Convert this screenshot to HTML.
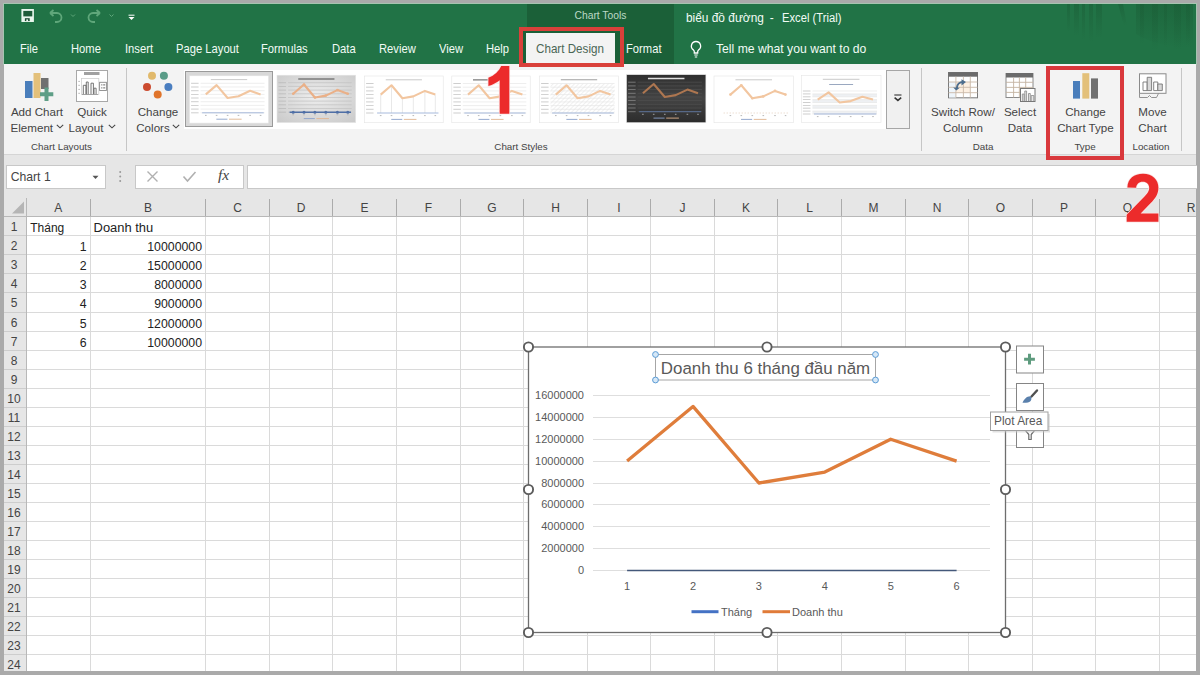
<!DOCTYPE html><html><head><meta charset="utf-8"><style>
*{margin:0;padding:0;box-sizing:border-box}
html,body{width:1200px;height:675px;overflow:hidden;background:#aaaaaa;font-family:"Liberation Sans",sans-serif;position:relative}
.a{position:absolute}
.t{position:absolute;white-space:nowrap;line-height:1}
</style></head><body>
<div class="a" style="left:4px;top:155px;width:1192px;height:62px;background:#e6e6e6"></div>
<svg class="a" style="left:0;top:0" width="1200" height="675" font-family="Liberation Sans, sans-serif"><rect x="26" y="216.5" width="1170" height="454.5" fill="#fff"/><rect x="4" y="198" width="1192" height="18.5" fill="#e6e6e6"/><rect x="4" y="198" width="22" height="473" fill="#e6e6e6"/><line x1="90.5" y1="216.5" x2="90.5" y2="671" stroke="#dadada" stroke-width="1"/><line x1="205.5" y1="216.5" x2="205.5" y2="671" stroke="#dadada" stroke-width="1"/><line x1="269.5" y1="216.5" x2="269.5" y2="671" stroke="#dadada" stroke-width="1"/><line x1="332.5" y1="216.5" x2="332.5" y2="671" stroke="#dadada" stroke-width="1"/><line x1="396.5" y1="216.5" x2="396.5" y2="671" stroke="#dadada" stroke-width="1"/><line x1="460.5" y1="216.5" x2="460.5" y2="671" stroke="#dadada" stroke-width="1"/><line x1="523.5" y1="216.5" x2="523.5" y2="671" stroke="#dadada" stroke-width="1"/><line x1="587.5" y1="216.5" x2="587.5" y2="671" stroke="#dadada" stroke-width="1"/><line x1="650.5" y1="216.5" x2="650.5" y2="671" stroke="#dadada" stroke-width="1"/><line x1="714.5" y1="216.5" x2="714.5" y2="671" stroke="#dadada" stroke-width="1"/><line x1="777.5" y1="216.5" x2="777.5" y2="671" stroke="#dadada" stroke-width="1"/><line x1="841.5" y1="216.5" x2="841.5" y2="671" stroke="#dadada" stroke-width="1"/><line x1="905.5" y1="216.5" x2="905.5" y2="671" stroke="#dadada" stroke-width="1"/><line x1="968.5" y1="216.5" x2="968.5" y2="671" stroke="#dadada" stroke-width="1"/><line x1="1032.5" y1="216.5" x2="1032.5" y2="671" stroke="#dadada" stroke-width="1"/><line x1="1095.5" y1="216.5" x2="1095.5" y2="671" stroke="#dadada" stroke-width="1"/><line x1="1159.5" y1="216.5" x2="1159.5" y2="671" stroke="#dadada" stroke-width="1"/><line x1="26" y1="235.5" x2="1196" y2="235.5" stroke="#dadada" stroke-width="1"/><line x1="26" y1="254.5" x2="1196" y2="254.5" stroke="#dadada" stroke-width="1"/><line x1="26" y1="273.5" x2="1196" y2="273.5" stroke="#dadada" stroke-width="1"/><line x1="26" y1="292.5" x2="1196" y2="292.5" stroke="#dadada" stroke-width="1"/><line x1="26" y1="312.5" x2="1196" y2="312.5" stroke="#dadada" stroke-width="1"/><line x1="26" y1="331.5" x2="1196" y2="331.5" stroke="#dadada" stroke-width="1"/><line x1="26" y1="350.5" x2="1196" y2="350.5" stroke="#dadada" stroke-width="1"/><line x1="26" y1="369.5" x2="1196" y2="369.5" stroke="#dadada" stroke-width="1"/><line x1="26" y1="388.5" x2="1196" y2="388.5" stroke="#dadada" stroke-width="1"/><line x1="26" y1="407.5" x2="1196" y2="407.5" stroke="#dadada" stroke-width="1"/><line x1="26" y1="426.5" x2="1196" y2="426.5" stroke="#dadada" stroke-width="1"/><line x1="26" y1="445.5" x2="1196" y2="445.5" stroke="#dadada" stroke-width="1"/><line x1="26" y1="464.5" x2="1196" y2="464.5" stroke="#dadada" stroke-width="1"/><line x1="26" y1="483.5" x2="1196" y2="483.5" stroke="#dadada" stroke-width="1"/><line x1="26" y1="502.5" x2="1196" y2="502.5" stroke="#dadada" stroke-width="1"/><line x1="26" y1="521.5" x2="1196" y2="521.5" stroke="#dadada" stroke-width="1"/><line x1="26" y1="540.5" x2="1196" y2="540.5" stroke="#dadada" stroke-width="1"/><line x1="26" y1="559.5" x2="1196" y2="559.5" stroke="#dadada" stroke-width="1"/><line x1="26" y1="578.5" x2="1196" y2="578.5" stroke="#dadada" stroke-width="1"/><line x1="26" y1="597.5" x2="1196" y2="597.5" stroke="#dadada" stroke-width="1"/><line x1="26" y1="616.5" x2="1196" y2="616.5" stroke="#dadada" stroke-width="1"/><line x1="26" y1="635.5" x2="1196" y2="635.5" stroke="#dadada" stroke-width="1"/><line x1="26" y1="654.5" x2="1196" y2="654.5" stroke="#dadada" stroke-width="1"/><line x1="90.5" y1="199" x2="90.5" y2="216.5" stroke="#ababab" stroke-width="1"/><line x1="205.5" y1="199" x2="205.5" y2="216.5" stroke="#ababab" stroke-width="1"/><line x1="269.5" y1="199" x2="269.5" y2="216.5" stroke="#ababab" stroke-width="1"/><line x1="332.5" y1="199" x2="332.5" y2="216.5" stroke="#ababab" stroke-width="1"/><line x1="396.5" y1="199" x2="396.5" y2="216.5" stroke="#ababab" stroke-width="1"/><line x1="460.5" y1="199" x2="460.5" y2="216.5" stroke="#ababab" stroke-width="1"/><line x1="523.5" y1="199" x2="523.5" y2="216.5" stroke="#ababab" stroke-width="1"/><line x1="587.5" y1="199" x2="587.5" y2="216.5" stroke="#ababab" stroke-width="1"/><line x1="650.5" y1="199" x2="650.5" y2="216.5" stroke="#ababab" stroke-width="1"/><line x1="714.5" y1="199" x2="714.5" y2="216.5" stroke="#ababab" stroke-width="1"/><line x1="777.5" y1="199" x2="777.5" y2="216.5" stroke="#ababab" stroke-width="1"/><line x1="841.5" y1="199" x2="841.5" y2="216.5" stroke="#ababab" stroke-width="1"/><line x1="905.5" y1="199" x2="905.5" y2="216.5" stroke="#ababab" stroke-width="1"/><line x1="968.5" y1="199" x2="968.5" y2="216.5" stroke="#ababab" stroke-width="1"/><line x1="1032.5" y1="199" x2="1032.5" y2="216.5" stroke="#ababab" stroke-width="1"/><line x1="1095.5" y1="199" x2="1095.5" y2="216.5" stroke="#ababab" stroke-width="1"/><line x1="1159.5" y1="199" x2="1159.5" y2="216.5" stroke="#ababab" stroke-width="1"/><line x1="4" y1="235.5" x2="26" y2="235.5" stroke="#cdcdcd" stroke-width="1"/><line x1="4" y1="254.5" x2="26" y2="254.5" stroke="#cdcdcd" stroke-width="1"/><line x1="4" y1="273.5" x2="26" y2="273.5" stroke="#cdcdcd" stroke-width="1"/><line x1="4" y1="292.5" x2="26" y2="292.5" stroke="#cdcdcd" stroke-width="1"/><line x1="4" y1="312.5" x2="26" y2="312.5" stroke="#cdcdcd" stroke-width="1"/><line x1="4" y1="331.5" x2="26" y2="331.5" stroke="#cdcdcd" stroke-width="1"/><line x1="4" y1="350.5" x2="26" y2="350.5" stroke="#cdcdcd" stroke-width="1"/><line x1="4" y1="369.5" x2="26" y2="369.5" stroke="#cdcdcd" stroke-width="1"/><line x1="4" y1="388.5" x2="26" y2="388.5" stroke="#cdcdcd" stroke-width="1"/><line x1="4" y1="407.5" x2="26" y2="407.5" stroke="#cdcdcd" stroke-width="1"/><line x1="4" y1="426.5" x2="26" y2="426.5" stroke="#cdcdcd" stroke-width="1"/><line x1="4" y1="445.5" x2="26" y2="445.5" stroke="#cdcdcd" stroke-width="1"/><line x1="4" y1="464.5" x2="26" y2="464.5" stroke="#cdcdcd" stroke-width="1"/><line x1="4" y1="483.5" x2="26" y2="483.5" stroke="#cdcdcd" stroke-width="1"/><line x1="4" y1="502.5" x2="26" y2="502.5" stroke="#cdcdcd" stroke-width="1"/><line x1="4" y1="521.5" x2="26" y2="521.5" stroke="#cdcdcd" stroke-width="1"/><line x1="4" y1="540.5" x2="26" y2="540.5" stroke="#cdcdcd" stroke-width="1"/><line x1="4" y1="559.5" x2="26" y2="559.5" stroke="#cdcdcd" stroke-width="1"/><line x1="4" y1="578.5" x2="26" y2="578.5" stroke="#cdcdcd" stroke-width="1"/><line x1="4" y1="597.5" x2="26" y2="597.5" stroke="#cdcdcd" stroke-width="1"/><line x1="4" y1="616.5" x2="26" y2="616.5" stroke="#cdcdcd" stroke-width="1"/><line x1="4" y1="635.5" x2="26" y2="635.5" stroke="#cdcdcd" stroke-width="1"/><line x1="4" y1="654.5" x2="26" y2="654.5" stroke="#cdcdcd" stroke-width="1"/><line x1="4" y1="216.5" x2="1196" y2="216.5" stroke="#b8b8b8" stroke-width="1"/><line x1="26.5" y1="198" x2="26.5" y2="671" stroke="#b8b8b8" stroke-width="1"/><polygon points="12,213.5 24,213.5 24,201.5" fill="#b5b5b5"/><text x="58.2" y="212" text-anchor="middle" font-size="12" fill="#444">A</text><text x="148.0" y="212" text-anchor="middle" font-size="12" fill="#444">B</text><text x="237.5" y="212" text-anchor="middle" font-size="12" fill="#444">C</text><text x="301.0" y="212" text-anchor="middle" font-size="12" fill="#444">D</text><text x="364.5" y="212" text-anchor="middle" font-size="12" fill="#444">E</text><text x="428.5" y="212" text-anchor="middle" font-size="12" fill="#444">F</text><text x="492.0" y="212" text-anchor="middle" font-size="12" fill="#444">G</text><text x="555.5" y="212" text-anchor="middle" font-size="12" fill="#444">H</text><text x="619.0" y="212" text-anchor="middle" font-size="12" fill="#444">I</text><text x="682.5" y="212" text-anchor="middle" font-size="12" fill="#444">J</text><text x="746.0" y="212" text-anchor="middle" font-size="12" fill="#444">K</text><text x="809.5" y="212" text-anchor="middle" font-size="12" fill="#444">L</text><text x="873.5" y="212" text-anchor="middle" font-size="12" fill="#444">M</text><text x="937.0" y="212" text-anchor="middle" font-size="12" fill="#444">N</text><text x="1000.5" y="212" text-anchor="middle" font-size="12" fill="#444">O</text><text x="1064.0" y="212" text-anchor="middle" font-size="12" fill="#444">P</text><text x="1127.5" y="212" text-anchor="middle" font-size="12" fill="#444">Q</text><text x="1191.0" y="212" text-anchor="middle" font-size="12" fill="#444">R</text><text x="14" y="230.8" text-anchor="middle" font-size="12" fill="#444">1</text><text x="14" y="249.8" text-anchor="middle" font-size="12" fill="#444">2</text><text x="14" y="268.8" text-anchor="middle" font-size="12" fill="#444">3</text><text x="14" y="287.8" text-anchor="middle" font-size="12" fill="#444">4</text><text x="14" y="306.8" text-anchor="middle" font-size="12" fill="#444">5</text><text x="14" y="326.8" text-anchor="middle" font-size="12" fill="#444">6</text><text x="14" y="345.8" text-anchor="middle" font-size="12" fill="#444">7</text><text x="14" y="364.8" text-anchor="middle" font-size="12" fill="#444">8</text><text x="14" y="383.8" text-anchor="middle" font-size="12" fill="#444">9</text><text x="14" y="402.8" text-anchor="middle" font-size="12" fill="#444">10</text><text x="14" y="421.8" text-anchor="middle" font-size="12" fill="#444">11</text><text x="14" y="440.8" text-anchor="middle" font-size="12" fill="#444">12</text><text x="14" y="459.8" text-anchor="middle" font-size="12" fill="#444">13</text><text x="14" y="478.8" text-anchor="middle" font-size="12" fill="#444">14</text><text x="14" y="497.8" text-anchor="middle" font-size="12" fill="#444">15</text><text x="14" y="516.8" text-anchor="middle" font-size="12" fill="#444">16</text><text x="14" y="535.8" text-anchor="middle" font-size="12" fill="#444">17</text><text x="14" y="554.8" text-anchor="middle" font-size="12" fill="#444">18</text><text x="14" y="573.8" text-anchor="middle" font-size="12" fill="#444">19</text><text x="14" y="592.8" text-anchor="middle" font-size="12" fill="#444">20</text><text x="14" y="611.8" text-anchor="middle" font-size="12" fill="#444">21</text><text x="14" y="630.8" text-anchor="middle" font-size="12" fill="#444">22</text><text x="14" y="649.8" text-anchor="middle" font-size="12" fill="#444">23</text><text x="14" y="668.8" text-anchor="middle" font-size="12" fill="#444">24</text><text x="30.3" y="231.7" font-size="12.3" fill="#222" textLength="34" lengthAdjust="spacingAndGlyphs">Tháng</text><text x="93.6" y="231.7" font-size="12.3" fill="#222" textLength="59.6" lengthAdjust="spacingAndGlyphs">Doanh thu</text><text x="86.5" y="250.7" text-anchor="end" font-size="12.3" fill="#222">1</text><text x="202" y="250.7" text-anchor="end" font-size="12.3" fill="#222">10000000</text><text x="86.5" y="269.7" text-anchor="end" font-size="12.3" fill="#222">2</text><text x="202" y="269.7" text-anchor="end" font-size="12.3" fill="#222">15000000</text><text x="86.5" y="288.7" text-anchor="end" font-size="12.3" fill="#222">3</text><text x="202" y="288.7" text-anchor="end" font-size="12.3" fill="#222">8000000</text><text x="86.5" y="307.7" text-anchor="end" font-size="12.3" fill="#222">4</text><text x="202" y="307.7" text-anchor="end" font-size="12.3" fill="#222">9000000</text><text x="86.5" y="327.7" text-anchor="end" font-size="12.3" fill="#222">5</text><text x="202" y="327.7" text-anchor="end" font-size="12.3" fill="#222">12000000</text><text x="86.5" y="346.7" text-anchor="end" font-size="12.3" fill="#222">6</text><text x="202" y="346.7" text-anchor="end" font-size="12.3" fill="#222">10000000</text><rect x="528.5" y="347" width="477.0" height="285.5" fill="#fff" stroke="#6e6e6e" stroke-width="1.3"/><line x1="593" y1="570.5" x2="990" y2="570.5" stroke="#dedede" stroke-width="1"/><text x="584" y="573.8" text-anchor="end" font-size="11" fill="#595959">0</text><line x1="593" y1="548.5" x2="990" y2="548.5" stroke="#dedede" stroke-width="1"/><text x="584" y="551.8" text-anchor="end" font-size="11" fill="#595959">2000000</text><line x1="593" y1="526.5" x2="990" y2="526.5" stroke="#dedede" stroke-width="1"/><text x="584" y="529.8" text-anchor="end" font-size="11" fill="#595959">4000000</text><line x1="593" y1="504.5" x2="990" y2="504.5" stroke="#dedede" stroke-width="1"/><text x="584" y="507.8" text-anchor="end" font-size="11" fill="#595959">6000000</text><line x1="593" y1="483.5" x2="990" y2="483.5" stroke="#dedede" stroke-width="1"/><text x="584" y="486.8" text-anchor="end" font-size="11" fill="#595959">8000000</text><line x1="593" y1="461.5" x2="990" y2="461.5" stroke="#dedede" stroke-width="1"/><text x="584" y="464.8" text-anchor="end" font-size="11" fill="#595959">10000000</text><line x1="593" y1="439.5" x2="990" y2="439.5" stroke="#dedede" stroke-width="1"/><text x="584" y="442.8" text-anchor="end" font-size="11" fill="#595959">12000000</text><line x1="593" y1="417.5" x2="990" y2="417.5" stroke="#dedede" stroke-width="1"/><text x="584" y="420.8" text-anchor="end" font-size="11" fill="#595959">14000000</text><line x1="593" y1="395.5" x2="990" y2="395.5" stroke="#dedede" stroke-width="1"/><text x="584" y="398.8" text-anchor="end" font-size="11" fill="#595959">16000000</text><text x="627.1" y="590" text-anchor="middle" font-size="11" fill="#595959">1</text><text x="693.0" y="590" text-anchor="middle" font-size="11" fill="#595959">2</text><text x="758.9" y="590" text-anchor="middle" font-size="11" fill="#595959">3</text><text x="824.8" y="590" text-anchor="middle" font-size="11" fill="#595959">4</text><text x="890.7" y="590" text-anchor="middle" font-size="11" fill="#595959">5</text><text x="956.6" y="590" text-anchor="middle" font-size="11" fill="#595959">6</text><polyline points="627.1,570.50 693.0,570.50 758.9,570.50 824.8,570.50 890.7,570.50 956.6,570.50" fill="none" stroke="#44587a" stroke-width="1.6"/><polyline points="627.1,461.1 693.0,406.4 758.9,483.0 824.8,472.1 890.7,439.2 956.6,461.1" fill="none" stroke="#df7d3b" stroke-width="3.3" stroke-linejoin="round"/><line x1="691.5" y1="611.7" x2="718.5" y2="611.7" stroke="#4472c4" stroke-width="3"/><text x="721" y="615.6" font-size="11" fill="#595959">Tháng</text><line x1="762.5" y1="611.7" x2="790" y2="611.7" stroke="#e07b39" stroke-width="3"/><text x="792" y="615.6" font-size="11" fill="#595959">Doanh thu</text><rect x="655.5" y="354.5" width="220" height="25.5" fill="none" stroke="#a6a6a6" stroke-width="1"/><text x="660.8" y="373.6" font-size="16.9" fill="#595959" textLength="209.4" lengthAdjust="spacingAndGlyphs">Doanh thu 6 tháng đầu năm</text><circle cx="655.5" cy="354.5" r="2.9" fill="#d6e8f7" stroke="#5b9bd5" stroke-width="1"/><circle cx="875.5" cy="354.5" r="2.9" fill="#d6e8f7" stroke="#5b9bd5" stroke-width="1"/><circle cx="655.5" cy="380" r="2.9" fill="#d6e8f7" stroke="#5b9bd5" stroke-width="1"/><circle cx="875.5" cy="380" r="2.9" fill="#d6e8f7" stroke="#5b9bd5" stroke-width="1"/><circle cx="528.5" cy="347" r="4.6" fill="#fff" stroke="#5c5c5c" stroke-width="1.9"/><circle cx="767" cy="347" r="4.6" fill="#fff" stroke="#5c5c5c" stroke-width="1.9"/><circle cx="1005.5" cy="347" r="4.6" fill="#fff" stroke="#5c5c5c" stroke-width="1.9"/><circle cx="528.5" cy="489.5" r="4.6" fill="#fff" stroke="#5c5c5c" stroke-width="1.9"/><circle cx="1005.5" cy="489.5" r="4.6" fill="#fff" stroke="#5c5c5c" stroke-width="1.9"/><circle cx="528.5" cy="632.5" r="4.6" fill="#fff" stroke="#5c5c5c" stroke-width="1.9"/><circle cx="767" cy="632.5" r="4.6" fill="#fff" stroke="#5c5c5c" stroke-width="1.9"/><circle cx="1005.5" cy="632.5" r="4.6" fill="#fff" stroke="#5c5c5c" stroke-width="1.9"/><rect x="1016.5" y="346" width="27" height="27" fill="#fff" stroke="#858585" stroke-width="1"/><rect x="1016.5" y="383.5" width="27" height="27" fill="#fff" stroke="#858585" stroke-width="1"/><rect x="1016.5" y="420.5" width="27" height="27" fill="#fff" stroke="#858585" stroke-width="1"/><path d="M1029.5 353.8v10.8M1024.1 359.2h10.8" stroke="#5e9b7e" stroke-width="3"/><path d="M1037 390.5 L1031.5 396.5" stroke="#505050" stroke-width="2.4" stroke-linecap="round"/><path d="M1022.5 402.8 C1024 399 1027 396 1030.5 396.2 C1032.3 398.2 1031.5 401.6 1028 402.4 C1026.5 402.8 1024.5 402.9 1022.5 402.8Z" fill="#5a80ac"/><path d="M1025.3 430.3h9.4l-3.5 4.2v5h-2.4v-5z" fill="#fff" stroke="#6a6a6a" stroke-width="1.2" stroke-linejoin="round"/><rect x="992.5" y="414" width="57.5" height="18.5" fill="#c8c8c8" opacity="0.55"/><rect x="990.5" y="412" width="57.5" height="18.5" fill="#fff" stroke="#a0a0a0" stroke-width="1"/><text x="994" y="425.3" font-size="11.9" fill="#595959">Plot Area</text></svg>
<div class="a" style="left:3px;top:3px;width:1194px;height:62px;background:#a6c4b0"></div>
<div class="a" style="left:4px;top:4px;width:1192px;height:60px;background:#217346"></div>
<div class="a" style="left:527px;top:4px;width:147px;height:60px;background:#1b6038"></div>
<svg class="a" style="left:1040px;top:4px" width="156" height="60">
<defs><linearGradient id="fd" x1="0" y1="0" x2="0" y2="1"><stop offset="0" stop-color="#1b5e37" stop-opacity="0.55"/><stop offset="1" stop-color="#1b5e37" stop-opacity="0"/></linearGradient></defs>
<g fill="url(#fd)">
<rect x="27" y="0" width="3" height="28"/><rect x="34" y="0" width="5" height="32"/><rect x="42" y="0" width="3" height="36"/><rect x="49" y="0" width="4" height="38"/><rect x="56" y="0" width="6" height="34"/>
<path d="M78 0h5l4 22h-3z"/>
<path d="M96 0h57v44c-20 0-40-4-57-14z"/>
<rect x="100" y="0" width="4" height="40"/><rect x="112" y="0" width="6" height="46"/><rect x="124" y="0" width="3" height="44"/><rect x="134" y="0" width="7" height="46"/><rect x="146" y="0" width="4" height="42"/>
</g></svg>
<div class="t" style="left:20px;top:43.2px;font-size:12.2px;color:#f2fbf5;transform:scaleX(0.92);transform-origin:0 0">File</div>
<div class="t" style="left:70.5px;top:43.2px;font-size:12.2px;color:#f2fbf5;transform:scaleX(0.92);transform-origin:0 0">Home</div>
<div class="t" style="left:125px;top:43.2px;font-size:12.2px;color:#f2fbf5;transform:scaleX(0.92);transform-origin:0 0">Insert</div>
<div class="t" style="left:175.7px;top:43.2px;font-size:12.2px;color:#f2fbf5;transform:scaleX(0.92);transform-origin:0 0">Page Layout</div>
<div class="t" style="left:261px;top:43.2px;font-size:12.2px;color:#f2fbf5;transform:scaleX(0.92);transform-origin:0 0">Formulas</div>
<div class="t" style="left:332px;top:43.2px;font-size:12.2px;color:#f2fbf5;transform:scaleX(0.92);transform-origin:0 0">Data</div>
<div class="t" style="left:379px;top:43.2px;font-size:12.2px;color:#f2fbf5;transform:scaleX(0.92);transform-origin:0 0">Review</div>
<div class="t" style="left:439px;top:43.2px;font-size:12.2px;color:#f2fbf5;transform:scaleX(0.92);transform-origin:0 0">View</div>
<div class="t" style="left:486px;top:43.2px;font-size:12.2px;color:#f2fbf5;transform:scaleX(0.92);transform-origin:0 0">Help</div>
<div class="t" style="left:626px;top:43.2px;font-size:12.2px;color:#f2fbf5;transform:scaleX(0.92);transform-origin:0 0">Format</div>
<div class="a" style="left:519px;top:27px;width:105px;height:40px;background:#1b6038"></div>
<div class="a" style="left:526px;top:33.3px;width:89px;height:30px;background:#f3f3f3"></div>
<div class="t" style="left:536px;top:43.2px;font-size:12.2px;color:#4a6655;transform:scaleX(0.955);transform-origin:0 0">Chart Design</div>
<div class="t" style="left:574.5px;top:10.5px;font-size:10.3px;color:#bcd9c6">Chart Tools</div>
<div class="t" style="left:685.5px;top:11.6px;font-size:12px;color:#f2fbf5;transform:scaleX(0.99);transform-origin:0 0">biểu đồ đường</div>
<div class="t" style="left:769.8px;top:11.6px;font-size:12px;color:#f2fbf5">-</div>
<div class="t" style="left:782px;top:11.6px;font-size:12px;color:#f2fbf5;transform:scaleX(0.935);transform-origin:0 0">Excel (Trial)</div>
<div class="t" style="left:716px;top:43.2px;font-size:12.2px;color:#f2fbf5">Tell me what you want to do</div>
<svg class="a" style="left:688px;top:39px" width="16" height="20"><path d="M8 2.5a4.6 4.6 0 0 0-2.6 8.4c.6.5.9 1.1.9 1.8v1.3h3.4v-1.3c0-.7.3-1.3.9-1.8A4.6 4.6 0 0 0 8 2.5z" fill="none" stroke="#fff" stroke-width="1.3"/><path d="M6.3 16h3.4M6.8 18h2.4" stroke="#fff" stroke-width="1.2"/></svg>
<svg class="a" style="left:0;top:0" width="150" height="30">
<path d="M21.4 9.1h12.5v12.9h-12.5z" fill="#eaf7ee"/><rect x="23.3" y="10.9" width="9" height="5.5" fill="#1e5c39"/><rect x="24.9" y="18.2" width="4.8" height="2.9" fill="#1e4d33"/><rect x="26.3" y="19.4" width="1.8" height="1.7" fill="#eaf7ee"/>
<path d="M50 13 L53.5 10 M50 13 L53.5 16 M50.5 13 H57 a4.5 4.5 0 0 1 0 9 H55" fill="none" stroke="#5fa77a" stroke-width="1.8"/>
<path d="M71 14.5l2 2 2-2" fill="none" stroke="#5fa77a" stroke-width="1"/>
<path d="M100 13 L96.5 10 M100 13 L96.5 16 M99.5 13 H93 a4.5 4.5 0 0 0 0 9 H95" fill="none" stroke="#5fa77a" stroke-width="1.8"/>
<path d="M109.5 14.5l2 2 2-2" fill="none" stroke="#5fa77a" stroke-width="1"/>
<path d="M128.5 15.2h6" stroke="#fff" stroke-width="1"/><path d="M128.5 17h6l-3 3z" fill="#fff"/>
</svg>
<div class="a" style="left:4px;top:64px;width:1192px;height:90px;background:#f3f3f3"></div>
<div class="a" style="left:4px;top:154px;width:1192px;height:1px;background:#d5d5d5"></div>
<div class="t" style="left:-63px;width:200px;text-align:center;top:106px;font-size:11.6px;color:#444">Add Chart</div>
<div class="t" style="left:-68.2px;width:200px;text-align:center;top:122px;font-size:11.6px;color:#444">Element</div>
<svg class="a" style="left:56px;top:123.5px" width="8" height="5"><path d="M.8 .8l3.2 3 3.2-3" fill="none" stroke="#444" stroke-width="1.1"/></svg>
<div class="t" style="left:-8px;width:200px;text-align:center;top:106px;font-size:11.6px;color:#444">Quick</div>
<div class="t" style="left:-14px;width:200px;text-align:center;top:122px;font-size:11.6px;color:#444">Layout</div>
<svg class="a" style="left:107.5px;top:123.5px" width="8" height="5"><path d="M.8 .8l3.2 3 3.2-3" fill="none" stroke="#444" stroke-width="1.1"/></svg>
<div class="t" style="left:-38.5px;width:200px;text-align:center;top:142px;font-size:9.8px;color:#444">Chart Layouts</div>
<div class="t" style="left:58px;width:200px;text-align:center;top:106px;font-size:11.6px;color:#444">Change</div>
<div class="t" style="left:53px;width:200px;text-align:center;top:122px;font-size:11.6px;color:#444">Colors</div>
<svg class="a" style="left:172.3px;top:123.5px" width="8" height="5"><path d="M.8 .8l3.2 3 3.2-3" fill="none" stroke="#444" stroke-width="1.1"/></svg>
<div class="t" style="left:421px;width:200px;text-align:center;top:142px;font-size:9.8px;color:#444">Chart Styles</div>
<div class="t" style="left:863px;width:200px;text-align:center;top:106px;font-size:11.6px;color:#444">Switch Row/</div>
<div class="t" style="left:863px;width:200px;text-align:center;top:122px;font-size:11.6px;color:#444">Column</div>
<div class="t" style="left:920px;width:200px;text-align:center;top:106px;font-size:11.6px;color:#444">Select</div>
<div class="t" style="left:920px;width:200px;text-align:center;top:122px;font-size:11.6px;color:#444">Data</div>
<div class="t" style="left:883px;width:200px;text-align:center;top:142px;font-size:9.8px;color:#444">Data</div>
<div class="t" style="left:985.5px;width:200px;text-align:center;top:106px;font-size:11.6px;color:#444">Change</div>
<div class="t" style="left:985.5px;width:200px;text-align:center;top:122px;font-size:11.6px;color:#444">Chart Type</div>
<div class="t" style="left:985px;width:200px;text-align:center;top:142px;font-size:9.8px;color:#444">Type</div>
<div class="t" style="left:1052.5px;width:200px;text-align:center;top:106px;font-size:11.6px;color:#444">Move</div>
<div class="t" style="left:1052.5px;width:200px;text-align:center;top:122px;font-size:11.6px;color:#444">Chart</div>
<div class="t" style="left:1051px;width:200px;text-align:center;top:142px;font-size:9.8px;color:#444">Location</div>
<div class="a" style="left:125.5px;top:68px;width:1px;height:83px;background:#c6c6c6"></div>
<div class="a" style="left:920.5px;top:68px;width:1px;height:83px;background:#c6c6c6"></div>
<div class="a" style="left:1180.5px;top:68px;width:1px;height:83px;background:#c6c6c6"></div>
<svg class="a" style="left:0;top:60px" width="1200" height="50">
<rect x="25" y="21" width="7.5" height="17" fill="#4a7ebb"/>
<rect x="33.5" y="13" width="7" height="25" fill="#e3c07a"/>
<rect x="41" y="18" width="7.5" height="11" fill="#707070"/>
<path d="M46.5 27.5v13.5M40 34.3h13.3" stroke="#5e9e86" stroke-width="4"/>
<rect x="76.5" y="10.5" width="31" height="31" fill="#fff" stroke="#a8a8a8" stroke-width="1"/>
<rect x="84" y="12" width="15.5" height="3" fill="#a0a0a0"/>
<rect x="81.5" y="18.5" width="17.3" height="16" fill="none" stroke="#cfcfcf" stroke-width="0.8"/>
<path d="M83.3 34.4v-9.1h2.7v9.1M86.3 34.4v-12.4h1.9v12.4M91 34.4v-11.2h2.4v11.2M94 34.4v-6.2h2.1v6.2" fill="none" stroke="#666" stroke-width="0.9"/>
<path d="M82 34.5h16" stroke="#999" stroke-width="0.8"/>
<path d="M78.4 21.4h1.4M78.4 25.3h1.4M78.4 29.4h1.4M78.4 33.3h1.4" stroke="#999" stroke-width="0.8"/>
<rect x="99.6" y="22.3" width="6.8" height="8.2" fill="#fff" stroke="#8a8a8a" stroke-width="0.9"/>
<path d="M101.2 24.9h1.2M103.2 24.9h2M101.2 27.9h1.2M103.2 27.9h2" stroke="#666" stroke-width="1"/>
<circle cx="152" cy="15.8" r="4" fill="#e1b96b"/>
<circle cx="163.9" cy="15.8" r="4" fill="#5a9c88"/>
<circle cx="147" cy="27.1" r="4" fill="#cb4b2f"/>
<circle cx="168.4" cy="27.1" r="4" fill="#4a7ec0"/>
<circle cx="157.7" cy="34.6" r="4" fill="#e0742a"/>
<rect x="948.5" y="12.5" width="29" height="25.3" fill="#fff" stroke="#7a7a7a" stroke-width="1"/>
<rect x="949" y="22" width="7" height="15.5" fill="#eef5fb"/>
<rect x="956" y="22" width="14.3" height="10.7" fill="#fdf0e2"/>
<rect x="948.3" y="12.2" width="29.6" height="4.5" fill="#6b6b6b"/>
<path d="M955.9 16.7v21M963.4 16.7v21M970.3 16.7v21M948.5 22h29M948.5 27.3h29M948.5 32.7h29" stroke="#c9b9a8" stroke-width="0.9"/>
<path d="M956.8 28.5 C956.8 24.5 959.5 22 963.5 22" fill="none" stroke="#4d6e8e" stroke-width="2.1"/>
<path d="M961.5 19.2 L966 22 L961.5 25.5z M953.2 27.4 L956.3 30.6 L959.8 27.8z" fill="#4d6e8e"/>
<rect x="1006" y="13.5" width="27" height="24" fill="#fff" stroke="#8a8a8a" stroke-width="1"/>
<rect x="1006" y="13" width="27" height="4.5" fill="#6b6b6b"/>
<path d="M1006 22.3h27M1006 27.4h27M1006 32.4h27M1013.6 17.5v20M1019.4 17.5v20M1025.7 17.5v20" stroke="#c4b3a1" stroke-width="0.9"/>
<rect x="1020.5" y="28.5" width="14.5" height="13" fill="#fff" stroke="#777" stroke-width="1"/>
<path d="M1022.3 41v-7h1.8v7M1024.8 41v-10h1.8v10M1028.5 41v-7.5h1.8v7.5M1031.2 41v-5.5h2.6v5.5" fill="#e6e6e6" stroke="#888" stroke-width="0.8"/>
<rect x="1073" y="21" width="7" height="17.6" fill="#4a7ebb"/>
<rect x="1082.3" y="13.2" width="7" height="25.4" fill="#e3c07a"/>
<rect x="1091" y="18.4" width="7" height="20.2" fill="#707070"/>
<rect x="1139.5" y="13.8" width="26.5" height="19.5" fill="#fff" stroke="#8a8a8a" stroke-width="1"/>
<path d="M1143 30.6v-8.6h4.2v8.6z M1153.7 30.6v-8.6h4.1v8.6z" fill="#fff" stroke="#777" stroke-width="0.9"/><path d="M1147.2 30.6v-13.3h4.4v13.3z M1157.8 30.6v-6.6h4.5v6.6z" fill="#d8d8d8" stroke="#777" stroke-width="0.9"/>
<path d="M1139.5 33.5v4h8l2-2 2 2h5l2-4" fill="none" stroke="#888" stroke-width="0.9"/>
</svg>
<div class="a" style="left:184px;top:70px;width:702px;height:59px;background:#fff"></div>
<div class="a" style="left:886px;top:70px;width:23.5px;height:59px;background:#f0f0f0;border:1px solid #a6a6a6"></div>
<svg class="a" style="left:886px;top:70px" width="24" height="59"><path d="M8.3 25h7.2" stroke="#333" stroke-width="1.1"/><path d="M8.6 27.6l3.3 2.8 3.3-2.8" fill="none" stroke="#333" stroke-width="1.5"/></svg>
<svg class="a" style="left:0;top:0" width="1200" height="160"><defs><radialGradient id="gr" cx="0.5" cy="0.45" r="0.7"><stop offset="0" stop-color="#eeeeee"/><stop offset="1" stop-color="#cbcbcb"/></radialGradient><linearGradient id="dk" x1="0" y1="0" x2="0" y2="1"><stop offset="0" stop-color="#2f2f2f"/><stop offset="0.5" stop-color="#444"/><stop offset="1" stop-color="#2c2c2c"/></linearGradient><pattern id="hatch" width="3" height="3" patternUnits="userSpaceOnUse" patternTransform="rotate(45)"><rect width="3" height="3" fill="#fff"/><line x1="0" y1="0" x2="0" y2="3" stroke="#e6e6e6" stroke-width="1.2"/></pattern></defs><rect x="185.5" y="71.5" width="87" height="55" fill="#d8d8d8" stroke="#9a9a9a" stroke-width="1"/><rect x="189.5" y="75.8" width="79" height="47.3" fill="#fff" stroke="#e4e4e4" stroke-width="0.6"/><line x1="200.56" y1="112.8" x2="264.55" y2="112.8" stroke="#e6e6e6" stroke-width="0.7"/><line x1="200.56" y1="109.1" x2="264.55" y2="109.1" stroke="#e6e6e6" stroke-width="0.7"/><line x1="200.56" y1="105.4" x2="264.55" y2="105.4" stroke="#e6e6e6" stroke-width="0.7"/><line x1="200.56" y1="101.7" x2="264.55" y2="101.7" stroke="#e6e6e6" stroke-width="0.7"/><line x1="200.56" y1="98.0" x2="264.55" y2="98.0" stroke="#e6e6e6" stroke-width="0.7"/><line x1="200.56" y1="94.4" x2="264.55" y2="94.4" stroke="#e6e6e6" stroke-width="0.7"/><line x1="200.56" y1="90.7" x2="264.55" y2="90.7" stroke="#e6e6e6" stroke-width="0.7"/><line x1="200.56" y1="87.0" x2="264.55" y2="87.0" stroke="#e6e6e6" stroke-width="0.7"/><line x1="200.56" y1="83.3" x2="264.55" y2="83.3" stroke="#e6e6e6" stroke-width="0.7"/><line x1="191.08" y1="112.8" x2="198.585" y2="112.8" stroke="#b4b4b4" stroke-width="0.8" opacity="0.8"/><line x1="191.08" y1="109.1" x2="198.585" y2="109.1" stroke="#b4b4b4" stroke-width="0.8" opacity="0.8"/><line x1="191.08" y1="105.4" x2="198.585" y2="105.4" stroke="#b4b4b4" stroke-width="0.8" opacity="0.8"/><line x1="191.08" y1="101.7" x2="198.585" y2="101.7" stroke="#b4b4b4" stroke-width="0.8" opacity="0.8"/><line x1="191.08" y1="98.0" x2="198.585" y2="98.0" stroke="#b4b4b4" stroke-width="0.8" opacity="0.8"/><line x1="191.08" y1="94.4" x2="198.585" y2="94.4" stroke="#b4b4b4" stroke-width="0.8" opacity="0.8"/><line x1="191.08" y1="90.7" x2="198.585" y2="90.7" stroke="#b4b4b4" stroke-width="0.8" opacity="0.8"/><line x1="191.08" y1="87.0" x2="198.585" y2="87.0" stroke="#b4b4b4" stroke-width="0.8" opacity="0.8"/><line x1="191.08" y1="83.3" x2="198.585" y2="83.3" stroke="#b4b4b4" stroke-width="0.8" opacity="0.8"/><line x1="210.83" y1="79.6" x2="247.17000000000002" y2="79.6" stroke="#c4c4c4" stroke-width="0.9"/><polyline points="205.8,94.4 216.6,85.1 227.6,98.0 238.5,96.2 250.1,90.7 260.6,94.4" fill="none" stroke="#f2c6a0" stroke-width="2.1" stroke-linejoin="round"/><line x1="202.14" y1="112.8" x2="263.76" y2="112.8" stroke="#9db2d8" stroke-width="0.9"/><line x1="205.0" y1="115.39999999999999" x2="206.6" y2="115.39999999999999" stroke="#b0b0b0" stroke-width="0.9"/><line x1="215.8" y1="115.39999999999999" x2="217.4" y2="115.39999999999999" stroke="#b0b0b0" stroke-width="0.9"/><line x1="226.8" y1="115.39999999999999" x2="228.4" y2="115.39999999999999" stroke="#b0b0b0" stroke-width="0.9"/><line x1="237.7" y1="115.39999999999999" x2="239.3" y2="115.39999999999999" stroke="#b0b0b0" stroke-width="0.9"/><line x1="249.3" y1="115.39999999999999" x2="250.9" y2="115.39999999999999" stroke="#b0b0b0" stroke-width="0.9"/><line x1="259.8" y1="115.39999999999999" x2="261.4" y2="115.39999999999999" stroke="#b0b0b0" stroke-width="0.9"/><line x1="216.36" y1="119.19999999999999" x2="227.42000000000002" y2="119.19999999999999" stroke="#8aa0c8" stroke-width="0.9"/><line x1="229.0" y1="119.19999999999999" x2="241.64" y2="119.19999999999999" stroke="#e0b48e" stroke-width="0.9"/><rect x="277" y="75.2" width="78.7" height="47.4" fill="url(#gr)" stroke="#e4e4e4" stroke-width="0.6"/><line x1="288.01800000000003" y1="112.2" x2="351.765" y2="112.2" stroke="#c2c2c2" stroke-width="0.7"/><line x1="288.01800000000003" y1="108.5" x2="351.765" y2="108.5" stroke="#c2c2c2" stroke-width="0.7"/><line x1="288.01800000000003" y1="104.8" x2="351.765" y2="104.8" stroke="#c2c2c2" stroke-width="0.7"/><line x1="288.01800000000003" y1="101.1" x2="351.765" y2="101.1" stroke="#c2c2c2" stroke-width="0.7"/><line x1="288.01800000000003" y1="97.5" x2="351.765" y2="97.5" stroke="#c2c2c2" stroke-width="0.7"/><line x1="288.01800000000003" y1="93.8" x2="351.765" y2="93.8" stroke="#c2c2c2" stroke-width="0.7"/><line x1="288.01800000000003" y1="90.1" x2="351.765" y2="90.1" stroke="#c2c2c2" stroke-width="0.7"/><line x1="288.01800000000003" y1="86.4" x2="351.765" y2="86.4" stroke="#c2c2c2" stroke-width="0.7"/><line x1="288.01800000000003" y1="82.7" x2="351.765" y2="82.7" stroke="#c2c2c2" stroke-width="0.7"/><line x1="278.574" y1="112.2" x2="286.0505" y2="112.2" stroke="#b4b4b4" stroke-width="0.8" opacity="0.8"/><line x1="278.574" y1="108.5" x2="286.0505" y2="108.5" stroke="#b4b4b4" stroke-width="0.8" opacity="0.8"/><line x1="278.574" y1="104.8" x2="286.0505" y2="104.8" stroke="#b4b4b4" stroke-width="0.8" opacity="0.8"/><line x1="278.574" y1="101.1" x2="286.0505" y2="101.1" stroke="#b4b4b4" stroke-width="0.8" opacity="0.8"/><line x1="278.574" y1="97.5" x2="286.0505" y2="97.5" stroke="#b4b4b4" stroke-width="0.8" opacity="0.8"/><line x1="278.574" y1="93.8" x2="286.0505" y2="93.8" stroke="#b4b4b4" stroke-width="0.8" opacity="0.8"/><line x1="278.574" y1="90.1" x2="286.0505" y2="90.1" stroke="#b4b4b4" stroke-width="0.8" opacity="0.8"/><line x1="278.574" y1="86.4" x2="286.0505" y2="86.4" stroke="#b4b4b4" stroke-width="0.8" opacity="0.8"/><line x1="278.574" y1="82.7" x2="286.0505" y2="82.7" stroke="#b4b4b4" stroke-width="0.8" opacity="0.8"/><line x1="298.249" y1="79.0" x2="334.451" y2="79.0" stroke="#7a7a7a" stroke-width="1.3"/><polyline points="293.2,93.8 304.0,84.5 314.9,97.5 325.8,95.6 337.4,90.1 347.8,93.8" fill="none" stroke="#eab088" stroke-width="2.1" stroke-linejoin="round"/><circle cx="293.2" cy="93.8" r="1.3" fill="#eab088"/><circle cx="304.0" cy="84.5" r="1.3" fill="#eab088"/><circle cx="314.9" cy="97.5" r="1.3" fill="#eab088"/><circle cx="325.8" cy="95.6" r="1.3" fill="#eab088"/><circle cx="337.4" cy="90.1" r="1.3" fill="#eab088"/><circle cx="347.8" cy="93.8" r="1.3" fill="#eab088"/><line x1="289.592" y1="112.2" x2="350.978" y2="112.2" stroke="#4f6fa6" stroke-width="1.6"/><circle cx="293.2" cy="112.2" r="1.5" fill="#4f6fa6"/><circle cx="304.0" cy="112.2" r="1.5" fill="#4f6fa6"/><circle cx="314.9" cy="112.2" r="1.5" fill="#4f6fa6"/><circle cx="325.8" cy="112.2" r="1.5" fill="#4f6fa6"/><circle cx="337.4" cy="112.2" r="1.5" fill="#4f6fa6"/><circle cx="347.8" cy="112.2" r="1.5" fill="#4f6fa6"/><line x1="292.4" y1="114.8" x2="294.0" y2="114.8" stroke="#b0b0b0" stroke-width="0.9"/><line x1="303.2" y1="114.8" x2="304.8" y2="114.8" stroke="#b0b0b0" stroke-width="0.9"/><line x1="314.1" y1="114.8" x2="315.7" y2="114.8" stroke="#b0b0b0" stroke-width="0.9"/><line x1="325.0" y1="114.8" x2="326.6" y2="114.8" stroke="#b0b0b0" stroke-width="0.9"/><line x1="336.6" y1="114.8" x2="338.2" y2="114.8" stroke="#b0b0b0" stroke-width="0.9"/><line x1="347.0" y1="114.8" x2="348.6" y2="114.8" stroke="#b0b0b0" stroke-width="0.9"/><line x1="303.758" y1="118.6" x2="314.776" y2="118.6" stroke="#8aa0c8" stroke-width="0.9"/><line x1="316.35" y1="118.6" x2="328.942" y2="118.6" stroke="#e0b48e" stroke-width="0.9"/><rect x="364.5" y="76" width="78.7" height="46.7" fill="#fff" stroke="#e4e4e4" stroke-width="0.6"/><line x1="380.7" y1="94.6" x2="380.7" y2="113.0" stroke="#d8d8d8" stroke-width="0.6"/><line x1="391.5" y1="85.3" x2="391.5" y2="113.0" stroke="#d8d8d8" stroke-width="0.6"/><line x1="402.4" y1="98.2" x2="402.4" y2="113.0" stroke="#d8d8d8" stroke-width="0.6"/><line x1="413.3" y1="96.4" x2="413.3" y2="113.0" stroke="#d8d8d8" stroke-width="0.6"/><line x1="424.9" y1="90.9" x2="424.9" y2="113.0" stroke="#d8d8d8" stroke-width="0.6"/><line x1="435.3" y1="94.6" x2="435.3" y2="113.0" stroke="#d8d8d8" stroke-width="0.6"/><line x1="366.074" y1="113.0" x2="373.5505" y2="113.0" stroke="#b4b4b4" stroke-width="0.8" opacity="0.8"/><line x1="366.074" y1="109.3" x2="373.5505" y2="109.3" stroke="#b4b4b4" stroke-width="0.8" opacity="0.8"/><line x1="366.074" y1="105.6" x2="373.5505" y2="105.6" stroke="#b4b4b4" stroke-width="0.8" opacity="0.8"/><line x1="366.074" y1="101.9" x2="373.5505" y2="101.9" stroke="#b4b4b4" stroke-width="0.8" opacity="0.8"/><line x1="366.074" y1="98.2" x2="373.5505" y2="98.2" stroke="#b4b4b4" stroke-width="0.8" opacity="0.8"/><line x1="366.074" y1="94.6" x2="373.5505" y2="94.6" stroke="#b4b4b4" stroke-width="0.8" opacity="0.8"/><line x1="366.074" y1="90.9" x2="373.5505" y2="90.9" stroke="#b4b4b4" stroke-width="0.8" opacity="0.8"/><line x1="366.074" y1="87.2" x2="373.5505" y2="87.2" stroke="#b4b4b4" stroke-width="0.8" opacity="0.8"/><line x1="366.074" y1="83.5" x2="373.5505" y2="83.5" stroke="#b4b4b4" stroke-width="0.8" opacity="0.8"/><line x1="385.749" y1="79.8" x2="421.951" y2="79.8" stroke="#c4c4c4" stroke-width="0.9"/><polyline points="380.7,94.6 391.5,85.3 402.4,98.2 413.3,96.4 424.9,90.9 435.3,94.6" fill="none" stroke="#f2c6a0" stroke-width="2.1" stroke-linejoin="round"/><line x1="377.092" y1="113.0" x2="438.478" y2="113.0" stroke="#9db2d8" stroke-width="0.9"/><line x1="379.9" y1="115.6" x2="381.5" y2="115.6" stroke="#b0b0b0" stroke-width="0.9"/><line x1="390.7" y1="115.6" x2="392.3" y2="115.6" stroke="#b0b0b0" stroke-width="0.9"/><line x1="401.6" y1="115.6" x2="403.2" y2="115.6" stroke="#b0b0b0" stroke-width="0.9"/><line x1="412.5" y1="115.6" x2="414.1" y2="115.6" stroke="#b0b0b0" stroke-width="0.9"/><line x1="424.1" y1="115.6" x2="425.7" y2="115.6" stroke="#b0b0b0" stroke-width="0.9"/><line x1="434.5" y1="115.6" x2="436.1" y2="115.6" stroke="#b0b0b0" stroke-width="0.9"/><line x1="391.258" y1="119.4" x2="402.276" y2="119.4" stroke="#8aa0c8" stroke-width="0.9"/><line x1="403.85" y1="119.4" x2="416.442" y2="119.4" stroke="#e0b48e" stroke-width="0.9"/><rect x="451.8" y="76" width="78.4" height="46.7" fill="#fff" stroke="#e4e4e4" stroke-width="0.6"/><line x1="462.776" y1="113.0" x2="526.28" y2="113.0" stroke="#e6e6e6" stroke-width="0.7"/><line x1="462.776" y1="109.3" x2="526.28" y2="109.3" stroke="#e6e6e6" stroke-width="0.7"/><line x1="462.776" y1="105.6" x2="526.28" y2="105.6" stroke="#e6e6e6" stroke-width="0.7"/><line x1="462.776" y1="101.9" x2="526.28" y2="101.9" stroke="#e6e6e6" stroke-width="0.7"/><line x1="462.776" y1="98.2" x2="526.28" y2="98.2" stroke="#e6e6e6" stroke-width="0.7"/><line x1="462.776" y1="94.6" x2="526.28" y2="94.6" stroke="#e6e6e6" stroke-width="0.7"/><line x1="462.776" y1="90.9" x2="526.28" y2="90.9" stroke="#e6e6e6" stroke-width="0.7"/><line x1="462.776" y1="87.2" x2="526.28" y2="87.2" stroke="#e6e6e6" stroke-width="0.7"/><line x1="462.776" y1="83.5" x2="526.28" y2="83.5" stroke="#e6e6e6" stroke-width="0.7"/><line x1="453.368" y1="113.0" x2="460.81600000000003" y2="113.0" stroke="#b4b4b4" stroke-width="0.8" opacity="0.8"/><line x1="453.368" y1="109.3" x2="460.81600000000003" y2="109.3" stroke="#b4b4b4" stroke-width="0.8" opacity="0.8"/><line x1="453.368" y1="105.6" x2="460.81600000000003" y2="105.6" stroke="#b4b4b4" stroke-width="0.8" opacity="0.8"/><line x1="453.368" y1="101.9" x2="460.81600000000003" y2="101.9" stroke="#b4b4b4" stroke-width="0.8" opacity="0.8"/><line x1="453.368" y1="98.2" x2="460.81600000000003" y2="98.2" stroke="#b4b4b4" stroke-width="0.8" opacity="0.8"/><line x1="453.368" y1="94.6" x2="460.81600000000003" y2="94.6" stroke="#b4b4b4" stroke-width="0.8" opacity="0.8"/><line x1="453.368" y1="90.9" x2="460.81600000000003" y2="90.9" stroke="#b4b4b4" stroke-width="0.8" opacity="0.8"/><line x1="453.368" y1="87.2" x2="460.81600000000003" y2="87.2" stroke="#b4b4b4" stroke-width="0.8" opacity="0.8"/><line x1="453.368" y1="83.5" x2="460.81600000000003" y2="83.5" stroke="#b4b4b4" stroke-width="0.8" opacity="0.8"/><line x1="472.968" y1="79.8" x2="509.03200000000004" y2="79.8" stroke="#7a7a7a" stroke-width="1.3"/><polyline points="468.0,94.6 478.7,85.3 489.6,98.2 500.4,96.4 511.9,90.9 522.4,94.6" fill="none" stroke="#f2c6a0" stroke-width="2.1" stroke-linejoin="round"/><line x1="464.344" y1="113.0" x2="525.496" y2="113.0" stroke="#9db2d8" stroke-width="0.9"/><line x1="467.2" y1="115.6" x2="468.8" y2="115.6" stroke="#b0b0b0" stroke-width="0.9"/><line x1="477.9" y1="115.6" x2="479.5" y2="115.6" stroke="#b0b0b0" stroke-width="0.9"/><line x1="488.8" y1="115.6" x2="490.4" y2="115.6" stroke="#b0b0b0" stroke-width="0.9"/><line x1="499.6" y1="115.6" x2="501.2" y2="115.6" stroke="#b0b0b0" stroke-width="0.9"/><line x1="511.1" y1="115.6" x2="512.7" y2="115.6" stroke="#b0b0b0" stroke-width="0.9"/><line x1="521.6" y1="115.6" x2="523.2" y2="115.6" stroke="#b0b0b0" stroke-width="0.9"/><line x1="478.456" y1="119.4" x2="489.432" y2="119.4" stroke="#8aa0c8" stroke-width="0.9"/><line x1="491.0" y1="119.4" x2="503.54400000000004" y2="119.4" stroke="#e0b48e" stroke-width="0.9"/><rect x="539.5" y="76" width="79" height="46.7" fill="#fff" stroke="#e4e4e4" stroke-width="0.6"/><rect x="550.56" y="83.5" width="63.99" height="29.5" fill="url(#hatch)"/><line x1="550.56" y1="113.0" x2="614.55" y2="113.0" stroke="#e6e6e6" stroke-width="0.7"/><line x1="550.56" y1="109.3" x2="614.55" y2="109.3" stroke="#e6e6e6" stroke-width="0.7"/><line x1="550.56" y1="105.6" x2="614.55" y2="105.6" stroke="#e6e6e6" stroke-width="0.7"/><line x1="550.56" y1="101.9" x2="614.55" y2="101.9" stroke="#e6e6e6" stroke-width="0.7"/><line x1="550.56" y1="98.2" x2="614.55" y2="98.2" stroke="#e6e6e6" stroke-width="0.7"/><line x1="550.56" y1="94.6" x2="614.55" y2="94.6" stroke="#e6e6e6" stroke-width="0.7"/><line x1="550.56" y1="90.9" x2="614.55" y2="90.9" stroke="#e6e6e6" stroke-width="0.7"/><line x1="550.56" y1="87.2" x2="614.55" y2="87.2" stroke="#e6e6e6" stroke-width="0.7"/><line x1="550.56" y1="83.5" x2="614.55" y2="83.5" stroke="#e6e6e6" stroke-width="0.7"/><line x1="541.08" y1="113.0" x2="548.585" y2="113.0" stroke="#b4b4b4" stroke-width="0.8" opacity="0.8"/><line x1="541.08" y1="109.3" x2="548.585" y2="109.3" stroke="#b4b4b4" stroke-width="0.8" opacity="0.8"/><line x1="541.08" y1="105.6" x2="548.585" y2="105.6" stroke="#b4b4b4" stroke-width="0.8" opacity="0.8"/><line x1="541.08" y1="101.9" x2="548.585" y2="101.9" stroke="#b4b4b4" stroke-width="0.8" opacity="0.8"/><line x1="541.08" y1="98.2" x2="548.585" y2="98.2" stroke="#b4b4b4" stroke-width="0.8" opacity="0.8"/><line x1="541.08" y1="94.6" x2="548.585" y2="94.6" stroke="#b4b4b4" stroke-width="0.8" opacity="0.8"/><line x1="541.08" y1="90.9" x2="548.585" y2="90.9" stroke="#b4b4b4" stroke-width="0.8" opacity="0.8"/><line x1="541.08" y1="87.2" x2="548.585" y2="87.2" stroke="#b4b4b4" stroke-width="0.8" opacity="0.8"/><line x1="541.08" y1="83.5" x2="548.585" y2="83.5" stroke="#b4b4b4" stroke-width="0.8" opacity="0.8"/><line x1="560.83" y1="79.8" x2="597.17" y2="79.8" stroke="#a0a0a0" stroke-width="1.1"/><polyline points="555.8,94.6 566.6,85.3 577.6,98.2 588.5,96.4 600.1,90.9 610.6,94.6" fill="none" stroke="#f2c6a0" stroke-width="2.1" stroke-linejoin="round"/><line x1="552.14" y1="113.0" x2="613.76" y2="113.0" stroke="#9db2d8" stroke-width="0.9"/><line x1="555.0" y1="115.6" x2="556.6" y2="115.6" stroke="#b0b0b0" stroke-width="0.9"/><line x1="565.8" y1="115.6" x2="567.4" y2="115.6" stroke="#b0b0b0" stroke-width="0.9"/><line x1="576.8" y1="115.6" x2="578.4" y2="115.6" stroke="#b0b0b0" stroke-width="0.9"/><line x1="587.7" y1="115.6" x2="589.3" y2="115.6" stroke="#b0b0b0" stroke-width="0.9"/><line x1="599.3" y1="115.6" x2="600.9" y2="115.6" stroke="#b0b0b0" stroke-width="0.9"/><line x1="609.8" y1="115.6" x2="611.4" y2="115.6" stroke="#b0b0b0" stroke-width="0.9"/><line x1="566.36" y1="119.4" x2="577.42" y2="119.4" stroke="#8aa0c8" stroke-width="0.9"/><line x1="579.0" y1="119.4" x2="591.64" y2="119.4" stroke="#e0b48e" stroke-width="0.9"/><rect x="626.5" y="74.7" width="79.4" height="48" fill="url(#dk)" stroke="#e4e4e4" stroke-width="0.6"/><line x1="637.616" y1="111.7" x2="701.9300000000001" y2="111.7" stroke="#505050" stroke-width="0.7"/><line x1="637.616" y1="108.0" x2="701.9300000000001" y2="108.0" stroke="#505050" stroke-width="0.7"/><line x1="637.616" y1="104.3" x2="701.9300000000001" y2="104.3" stroke="#505050" stroke-width="0.7"/><line x1="637.616" y1="100.6" x2="701.9300000000001" y2="100.6" stroke="#505050" stroke-width="0.7"/><line x1="637.616" y1="97.0" x2="701.9300000000001" y2="97.0" stroke="#505050" stroke-width="0.7"/><line x1="637.616" y1="93.3" x2="701.9300000000001" y2="93.3" stroke="#505050" stroke-width="0.7"/><line x1="637.616" y1="89.6" x2="701.9300000000001" y2="89.6" stroke="#505050" stroke-width="0.7"/><line x1="637.616" y1="85.9" x2="701.9300000000001" y2="85.9" stroke="#505050" stroke-width="0.7"/><line x1="637.616" y1="82.2" x2="701.9300000000001" y2="82.2" stroke="#505050" stroke-width="0.7"/><line x1="628.088" y1="111.7" x2="635.631" y2="111.7" stroke="#9a9a9a" stroke-width="0.8" opacity="0.8"/><line x1="628.088" y1="108.0" x2="635.631" y2="108.0" stroke="#9a9a9a" stroke-width="0.8" opacity="0.8"/><line x1="628.088" y1="104.3" x2="635.631" y2="104.3" stroke="#9a9a9a" stroke-width="0.8" opacity="0.8"/><line x1="628.088" y1="100.6" x2="635.631" y2="100.6" stroke="#9a9a9a" stroke-width="0.8" opacity="0.8"/><line x1="628.088" y1="97.0" x2="635.631" y2="97.0" stroke="#9a9a9a" stroke-width="0.8" opacity="0.8"/><line x1="628.088" y1="93.3" x2="635.631" y2="93.3" stroke="#9a9a9a" stroke-width="0.8" opacity="0.8"/><line x1="628.088" y1="89.6" x2="635.631" y2="89.6" stroke="#9a9a9a" stroke-width="0.8" opacity="0.8"/><line x1="628.088" y1="85.9" x2="635.631" y2="85.9" stroke="#9a9a9a" stroke-width="0.8" opacity="0.8"/><line x1="628.088" y1="82.2" x2="635.631" y2="82.2" stroke="#9a9a9a" stroke-width="0.8" opacity="0.8"/><line x1="647.938" y1="78.5" x2="684.462" y2="78.5" stroke="#e0e0e0" stroke-width="1.3"/><polyline points="642.9,93.3 653.7,84.0 664.8,97.0 675.7,95.1 687.4,89.6 698.0,93.3" fill="none" stroke="#ad7650" stroke-width="2.1" stroke-linejoin="round"/><line x1="639.204" y1="111.7" x2="701.136" y2="111.7" stroke="#5d76a0" stroke-width="0.9"/><line x1="642.1" y1="114.3" x2="643.7" y2="114.3" stroke="#aaa" stroke-width="0.9"/><line x1="652.9" y1="114.3" x2="654.5" y2="114.3" stroke="#aaa" stroke-width="0.9"/><line x1="664.0" y1="114.3" x2="665.6" y2="114.3" stroke="#aaa" stroke-width="0.9"/><line x1="674.9" y1="114.3" x2="676.5" y2="114.3" stroke="#aaa" stroke-width="0.9"/><line x1="686.6" y1="114.3" x2="688.2" y2="114.3" stroke="#aaa" stroke-width="0.9"/><line x1="697.2" y1="114.3" x2="698.8" y2="114.3" stroke="#aaa" stroke-width="0.9"/><line x1="653.496" y1="118.1" x2="664.612" y2="118.1" stroke="#8aa0c8" stroke-width="0.9"/><line x1="666.2" y1="118.1" x2="678.904" y2="118.1" stroke="#e0b48e" stroke-width="0.9"/><rect x="714" y="76" width="79.5" height="46.7" fill="#fff" stroke="#e4e4e4" stroke-width="0.6"/><line x1="735.465" y1="79.8" x2="772.035" y2="79.8" stroke="#c4c4c4" stroke-width="0.9"/><polyline points="730.4,94.6 741.3,85.3 752.3,98.2 763.3,96.4 775.0,90.9 785.5,94.6" fill="none" stroke="#f2c6a0" stroke-width="2.1" stroke-linejoin="round"/><circle cx="730.4" cy="94.6" r="1.3" fill="#f2c6a0"/><circle cx="741.3" cy="85.3" r="1.3" fill="#f2c6a0"/><circle cx="752.3" cy="98.2" r="1.3" fill="#f2c6a0"/><circle cx="763.3" cy="96.4" r="1.3" fill="#f2c6a0"/><circle cx="775.0" cy="90.9" r="1.3" fill="#f2c6a0"/><circle cx="785.5" cy="94.6" r="1.3" fill="#f2c6a0"/><line x1="723.54" y1="113.0" x2="788.73" y2="113.0" stroke="#e0c9b5" stroke-width="0.6" stroke-dasharray="1.5 1.5"/><line x1="729.6" y1="115.6" x2="731.2" y2="115.6" stroke="#b0b0b0" stroke-width="0.9"/><line x1="740.5" y1="115.6" x2="742.1" y2="115.6" stroke="#b0b0b0" stroke-width="0.9"/><line x1="751.5" y1="115.6" x2="753.1" y2="115.6" stroke="#b0b0b0" stroke-width="0.9"/><line x1="762.5" y1="115.6" x2="764.1" y2="115.6" stroke="#b0b0b0" stroke-width="0.9"/><line x1="774.2" y1="115.6" x2="775.8" y2="115.6" stroke="#b0b0b0" stroke-width="0.9"/><line x1="784.8" y1="115.6" x2="786.3" y2="115.6" stroke="#b0b0b0" stroke-width="0.9"/><line x1="741.03" y1="119.4" x2="752.16" y2="119.4" stroke="#8aa0c8" stroke-width="0.9"/><line x1="753.75" y1="119.4" x2="766.47" y2="119.4" stroke="#e0b48e" stroke-width="0.9"/><rect x="801.3" y="75.5" width="79.7" height="46.8" fill="#fff" stroke="#e4e4e4" stroke-width="0.6"/><rect x="812.458" y="111.1" width="64.557" height="2.9" fill="#eef0f3"/><rect x="812.458" y="105.4" width="64.557" height="2.9" fill="#eef0f3"/><rect x="812.458" y="99.6" width="64.557" height="2.9" fill="#eef0f3"/><rect x="812.458" y="93.9" width="64.557" height="2.9" fill="#eef0f3"/><line x1="812.458" y1="114.0" x2="877.015" y2="114.0" stroke="#e6e6e6" stroke-width="0.7"/><line x1="812.458" y1="111.1" x2="877.015" y2="111.1" stroke="#e6e6e6" stroke-width="0.7"/><line x1="812.458" y1="108.2" x2="877.015" y2="108.2" stroke="#e6e6e6" stroke-width="0.7"/><line x1="812.458" y1="105.4" x2="877.015" y2="105.4" stroke="#e6e6e6" stroke-width="0.7"/><line x1="812.458" y1="102.5" x2="877.015" y2="102.5" stroke="#e6e6e6" stroke-width="0.7"/><line x1="812.458" y1="99.6" x2="877.015" y2="99.6" stroke="#e6e6e6" stroke-width="0.7"/><line x1="812.458" y1="96.8" x2="877.015" y2="96.8" stroke="#e6e6e6" stroke-width="0.7"/><line x1="812.458" y1="93.9" x2="877.015" y2="93.9" stroke="#e6e6e6" stroke-width="0.7"/><line x1="812.458" y1="91.0" x2="877.015" y2="91.0" stroke="#e6e6e6" stroke-width="0.7"/><line x1="802.894" y1="114.0" x2="810.4654999999999" y2="114.0" stroke="#b4b4b4" stroke-width="0.8" opacity="0.8"/><line x1="802.894" y1="111.1" x2="810.4654999999999" y2="111.1" stroke="#b4b4b4" stroke-width="0.8" opacity="0.8"/><line x1="802.894" y1="108.2" x2="810.4654999999999" y2="108.2" stroke="#b4b4b4" stroke-width="0.8" opacity="0.8"/><line x1="802.894" y1="105.4" x2="810.4654999999999" y2="105.4" stroke="#b4b4b4" stroke-width="0.8" opacity="0.8"/><line x1="802.894" y1="102.5" x2="810.4654999999999" y2="102.5" stroke="#b4b4b4" stroke-width="0.8" opacity="0.8"/><line x1="802.894" y1="99.6" x2="810.4654999999999" y2="99.6" stroke="#b4b4b4" stroke-width="0.8" opacity="0.8"/><line x1="802.894" y1="96.8" x2="810.4654999999999" y2="96.8" stroke="#b4b4b4" stroke-width="0.8" opacity="0.8"/><line x1="802.894" y1="93.9" x2="810.4654999999999" y2="93.9" stroke="#b4b4b4" stroke-width="0.8" opacity="0.8"/><line x1="802.894" y1="91.0" x2="810.4654999999999" y2="91.0" stroke="#b4b4b4" stroke-width="0.8" opacity="0.8"/><line x1="822.819" y1="79.3" x2="859.481" y2="79.3" stroke="#c4c4c4" stroke-width="0.9"/><line x1="829.1949999999999" y1="84.5" x2="853.105" y2="84.5" stroke="#9aa8c0" stroke-width="1"/><polyline points="817.7,99.6 828.6,92.4 839.7,102.5 850.7,101.1 862.4,96.8 873.0,99.6" fill="none" stroke="#f2c6a0" stroke-width="2.1" stroke-linejoin="round"/><line x1="814.0519999999999" y1="114.0" x2="876.218" y2="114.0" stroke="#9db2d8" stroke-width="0.9"/><line x1="816.9" y1="116.6" x2="818.5" y2="116.6" stroke="#b0b0b0" stroke-width="0.9"/><line x1="827.8" y1="116.6" x2="829.4" y2="116.6" stroke="#b0b0b0" stroke-width="0.9"/><line x1="838.9" y1="116.6" x2="840.5" y2="116.6" stroke="#b0b0b0" stroke-width="0.9"/><line x1="849.9" y1="116.6" x2="851.5" y2="116.6" stroke="#b0b0b0" stroke-width="0.9"/><line x1="861.6" y1="116.6" x2="863.2" y2="116.6" stroke="#b0b0b0" stroke-width="0.9"/><line x1="872.2" y1="116.6" x2="873.8" y2="116.6" stroke="#b0b0b0" stroke-width="0.9"/></svg>
<div class="a" style="left:519px;top:27px;width:105px;height:40px;border:4.5px solid #d9403a"></div>
<div class="a" style="left:1046px;top:66px;width:78px;height:93.5px;border:4px solid #d9383c"></div>
<div class="a" style="left:6px;top:165px;width:99.5px;height:24px;background:#fff;border:1px solid #c8c8c8"></div>
<div class="t" style="left:10.7px;top:170.7px;font-size:12.2px;color:#444">Chart 1</div>
<svg class="a" style="left:0;top:160px" width="260" height="35"><path d="M92.5 15.8h6l-3 3.2z" fill="#555"/>
<circle cx="120.2" cy="12" r="1" fill="#999"/><circle cx="120.2" cy="16.5" r="1" fill="#999"/><circle cx="120.2" cy="21" r="1" fill="#999"/></svg>
<div class="a" style="left:135px;top:165px;width:108.5px;height:24px;background:#fff;border:1px solid #c8c8c8"></div>
<svg class="a" style="left:135px;top:165px" width="110" height="24">
<path d="M12.5 6.5l10 10M22.5 6.5l-10 10" stroke="#b0b0b0" stroke-width="1.4"/>
<path d="M48.5 11.5l4 4.5 8-9" fill="none" stroke="#b0b0b0" stroke-width="1.6"/>
</svg>
<div class="t" style="left:218px;top:167.2px;font-size:15.5px;color:#444;font-family:'Liberation Serif',serif;font-style:italic">fx</div>
<div class="a" style="left:246.5px;top:165px;width:950px;height:24px;background:#fff;border:1px solid #c8c8c8;border-right:none"></div>
<svg class="a" style="left:0;top:0" width="1200" height="675">
<path d="M501.2,66 L509.3,66 L509.3,113.8 L499.7,113.8 L499.7,80.3 C496.5,82.8 492.8,84.8 488.4,86 L488.4,77.8 C494.5,75.5 499,71 501.2,66 Z" fill="#ec2b2b" stroke="#fbe3e3" stroke-width="1.6" paint-order="stroke" stroke-linejoin="round"/>
<path d="M1127.4,187.4 C1127.8,178.8 1134,173.8 1143,173.8 C1152.3,173.8 1158.4,179.6 1158.4,187.8 C1158.4,194 1155.6,198.3 1150.5,203.3 L1140.6,213.6 L1158.4,213.6 L1158.4,221.8 L1126.7,221.8 L1126.7,214.8 L1142.8,198.2 C1147.2,193.7 1149.2,191.2 1149.2,187.9 C1149.2,184.2 1146.6,181.7 1142.8,181.7 C1138.7,181.7 1136.3,184.4 1136.1,187.8 Z" fill="#ec2b2b" stroke="#fbe3e3" stroke-width="1.6" paint-order="stroke" stroke-linejoin="round"/>
</svg>
</body></html>
